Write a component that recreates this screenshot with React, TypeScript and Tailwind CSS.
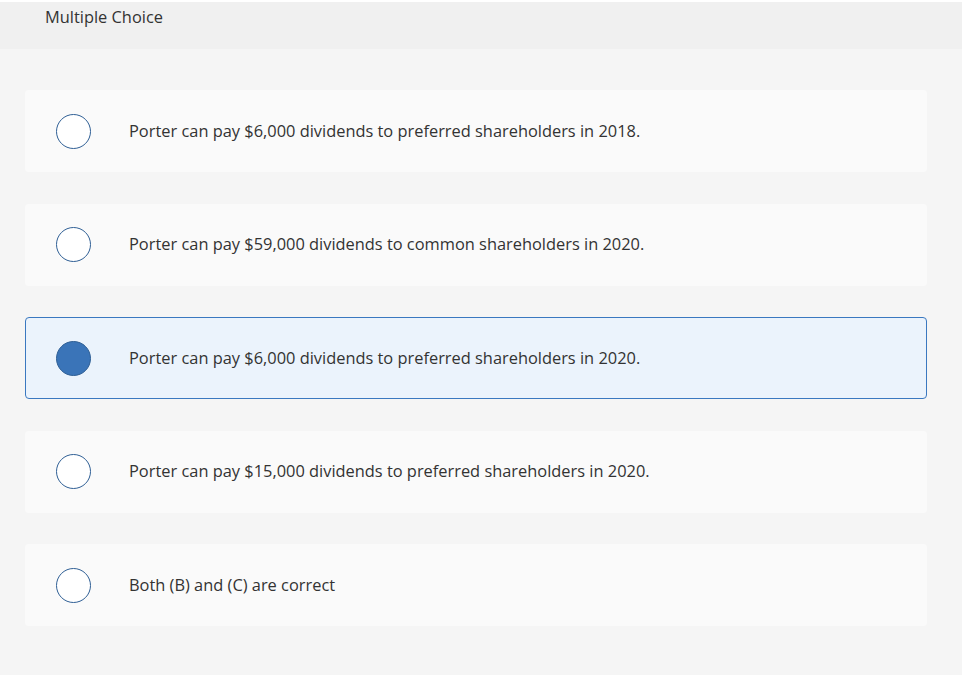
import { FC } from "react";

const options = [
  "Porter can pay $6,000 dividends to preferred shareholders in 2018.",
  "Porter can pay $59,000 dividends to common shareholders in 2020.",
  "Porter can pay $6,000 dividends to preferred shareholders in 2020.",
  "Porter can pay $15,000 dividends to preferred shareholders in 2020.",
  "Both (B) and (C) are correct",
];

const selected = 2;

const Option: FC<{ text: string; checked: boolean }> = ({ text, checked }) => (
  <div
    className={
      checked
        ? "flex h-[82px] items-center gap-[38px] rounded-[4px] border border-[#3a78c0] bg-[#ebf3fc] pl-[30px]"
        : "flex h-[82px] items-center gap-[38px] rounded-[4px] border border-transparent bg-[#fafafa] pl-[30px]"
    }
  >
    {checked ? (
      <span className="block h-[35px] w-[35px] shrink-0 rounded-full border border-[#2f5f95] bg-[#3a74b8]" />
    ) : (
      <span className="block h-[35px] w-[35px] shrink-0 rounded-full border-[1.5px] border-[#2f5f95] bg-white" />
    )}
    <p className="text-[16.4px] text-[#333333]">{text}</p>
  </div>
);

export default function App() {
  return (
    <div className="h-[675px] w-[966px] bg-white pt-[2px] pr-[4px] font-['Open_Sans',sans-serif]">
      <div className="h-full bg-[#f5f5f5]">
        <div className="h-[47px] bg-[#f0f0f0] pl-[45px] pt-[3px] text-[16.4px] text-[#333333]">
          Multiple Choice
        </div>
        <div className="flex flex-col gap-[31.5px] pl-[25px] pr-[35px] pt-[41px]">
          {options.map((o, i) => (
            <Option key={i} text={o} checked={i === selected} />
          ))}
        </div>
      </div>
    </div>
  );
}
